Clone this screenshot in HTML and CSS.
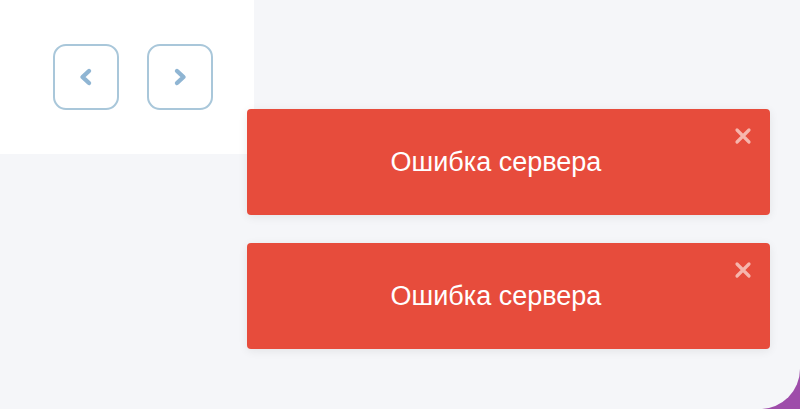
FILE: index.html
```html
<!DOCTYPE html>
<html lang="ru">
<head>
<meta charset="utf-8">
<link rel="stylesheet" href="styles.css">
</head>
<body>
<div class="app">
  <div class="panel">
    <button class="nav-btn" aria-label="prev">
      <svg width="18" height="20" viewBox="0 0 18 20"><path d="M12 4 L5.5 10 L12 16" fill="none" stroke="#8fb5d3" stroke-width="4.4" stroke-linecap="round" stroke-linejoin="round"/></svg>
    </button>
    <button class="nav-btn" aria-label="next">
      <svg width="18" height="20" viewBox="0 0 18 20"><path d="M6 4 L12.5 10 L6 16" fill="none" stroke="#8fb5d3" stroke-width="4.4" stroke-linecap="round" stroke-linejoin="round"/></svg>
    </button>
  </div>
</div>
<div class="toasts">
  <div class="toast">
    <span class="toast-text">Ошибка сервера</span>
    <span class="toast-close"><svg width="18" height="18" viewBox="0 0 18 18"><path d="M3 3 L15 15 M15 3 L3 15" stroke="currentColor" stroke-width="3.2" stroke-linecap="round"/></svg></span>
  </div>
  <div class="toast">
    <span class="toast-text">Ошибка сервера</span>
    <span class="toast-close"><svg width="18" height="18" viewBox="0 0 18 18"><path d="M3 3 L15 15 M15 3 L3 15" stroke="currentColor" stroke-width="3.2" stroke-linecap="round"/></svg></span>
  </div>
</div>
</body>
</html>
```
FILE: styles.css
```css
html {
  background: #9e4daa;
}
body {
  margin: 0;
  font-family: "Liberation Sans", Arial, sans-serif;
}
.app {
  height: 409px;
  background: #f5f6f9;
  border-bottom-right-radius: 40px;
  overflow: hidden;
}
.panel {
  width: 254px;
  height: 154px;
  box-sizing: border-box;
  background: #ffffff;
  display: flex;
  gap: 28px;
  padding: 44px 0 0 53px;
}
.nav-btn {
  width: 66px;
  height: 66px;
  box-sizing: border-box;
  border: 2px solid #a9c7da;
  border-radius: 13px;
  background: #ffffff;
  display: flex;
  align-items: center;
  justify-content: center;
  padding: 0;
}
.toasts {
  position: absolute;
  left: 247px;
  top: 109px;
  width: 523px;
  display: flex;
  flex-direction: column;
  gap: 28px;
}
.toast {
  position: relative;
  height: 106px;
  box-sizing: border-box;
  background: #e74c3c;
  border-radius: 4px;
  box-shadow: 0 2px 10px rgba(0, 0, 0, 0.08);
  display: flex;
  align-items: center;
  justify-content: center;
  padding: 1px 45px 0 20px;
}
.toast-text {
  color: #ffffff;
  font-size: 27px;
}
.toast-close {
  position: absolute;
  top: 18px;
  right: 18px;
  color: #f6b6ad;
  display: flex;
}
```
